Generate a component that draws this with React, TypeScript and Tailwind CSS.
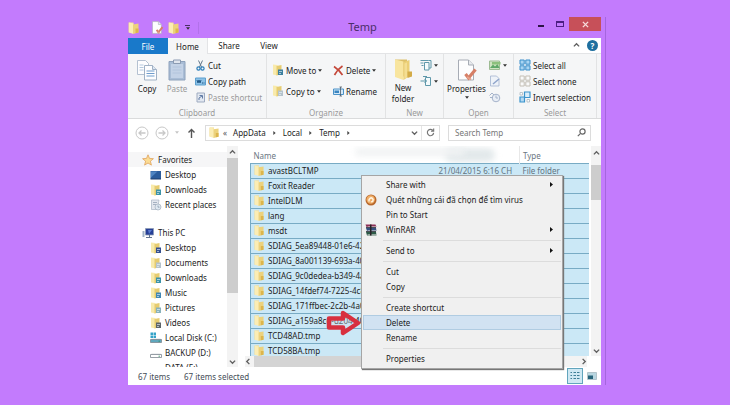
import type { ReactNode } from "react";
import clsx from "clsx";

interface IconProps {
  className?: string;
}

function FolderIcon({ className = "w-[11px] h-3" }: IconProps) {
  return (
    <svg viewBox="0 0 11 12" preserveAspectRatio="none" className={clsx("shrink-0", className)}>
      <path d="M0.500 0.500h5v10h-5z" fill="#f3dd92" />
      <path d="M1 0.500l4.500 1v10.500l-4.500-1.500z" fill="#fbedb4" />
      <path d="M5 2.500l5.500-1v9l-5.500 1.500z" fill="#ecd27c" />
      <path d="M7.500 6.500h3v4l-3 0.800z" fill="#dcb54c" />
    </svg>
  );
}

function BadgeFolderIcon({ color }: { color: string }) {
  return (
    <svg viewBox="0 0 12 12" className="size-3 shrink-0">
      <path d="M1 0.500l4.500 0.500v10.500l-4.500-1z" fill="#f8eaac" />
      <path d="M4.500 2l5-1v9l-5 1.500z" fill="#e6cc70" />
      <path d="M6 5.500h5v5.500H6z" fill={color} />
      <path d="M7 7.500h3M7 9.500h2" stroke="#eef6fb" strokeWidth="0.600" />
    </svg>
  );
}

function StarIcon() {
  return (
    <svg viewBox="0 0 12 12" className="size-3 shrink-0">
      <path d="M6 0.800l1.500 3.600 3.900 0.300-3 2.500 1 3.900L6 9l-3.400 2.100 1-3.900-3-2.500 3.900-0.300z" fill="#fbdc94" stroke="#e0a25a" strokeWidth="0.800" />
    </svg>
  );
}

function MonitorIcon() {
  return (
    <svg viewBox="0 0 12 12" className="size-3 shrink-0">
      <path d="M0.500 2h10.500v8H0.500z" fill="#2a5c9c" />
      <path d="M1 2.500l6.500 0-6.500 6z" fill="#4e84c2" />
      <path d="M0.500 10h10.500" stroke="#1c3c6c" />
    </svg>
  );
}

function ComputerIcon() {
  return (
    <svg viewBox="0 0 12 12" className="size-3 shrink-0">
      <path d="M0.500 4h2v6h-2z" fill="#9fb0c4" />
      <path d="M3.500 1.500h8v6.500h-8z" fill="#263f96" stroke="#8b9bb5" strokeWidth="0.800" />
      <path d="M6 3l4 0-3 4z" fill="#5a7ad0" />
      <path d="M4 10.500h6M7.500 8v2.500" stroke="#63758f" />
    </svg>
  );
}

function RecentIcon() {
  return (
    <svg viewBox="0 0 12 12" className="size-3 shrink-0">
      <path d="M1.500 1h7.500l-1.500 9.500h-6z" fill="#e3e7ee" stroke="#a9b4c4" strokeWidth="0.700" />
      <path d="M3 3.500h4M3 5.500h3" stroke="#8898ac" strokeWidth="0.700" />
      <circle cx="8" cy="8" r="3" fill="#dfe9f2" stroke="#a3afbd" strokeWidth="0.700" />
      <path d="M8 6.500v1.700h1.500" fill="none" stroke="#7f90a3" strokeWidth="0.700" />
    </svg>
  );
}

function DiskIcon({ system }: { system?: boolean }) {
  return (
    <svg viewBox="0 0 12 12" className="size-3 shrink-0">
      {system && <path d="M0.500 0.500h2.500v2.500H0.500zM3.500 0.500h2.500v2.500H3.500zM0.500 3.500h2.500v2.500H0.500zM3.500 3.500h2.500v2.500H3.500z" fill="#35a3c9" />}
      <path d="M1.500 6.500h9l1 2H0.500z" fill="#dfe3e6" />
      <path d="M0.500 7.500h11v3H0.500z" fill={system ? "#5fa7bd" : "#fff"} stroke="#7d8890" strokeWidth="0.800" />
      <path d="M8.500 9.200h1.500" stroke="#2f8b5c" strokeWidth="0.800" />
    </svg>
  );
}

function DocCheckIcon({ className = "size-3" }: IconProps) {
  return (
    <svg viewBox="0 0 22 22" className={clsx("shrink-0", className)}>
      <path d="M2.500 1h10l5 5v15h-15z" fill="#fdfdfe" stroke="#a7acb5" />
      <path d="M12.500 1v5h5" fill="#e7eaee" stroke="#a7acb5" />
      <path d="M9.500 15l3 4 7-8.500" fill="none" stroke="#d67f66" strokeWidth="3.200" />
      <path d="M11 18l4 2.500" stroke="#e6a08a" strokeWidth="2" />
    </svg>
  );
}

function CopyIcon() {
  return (
    <svg viewBox="0 0 22 22" className="size-[22px]">
      <path d="M1.500 1.500h8l3 3v11h-11z" fill="#fdfdfe" stroke="#b4c1d1" />
      <path d="M3.500 6h4M3.500 8.500h4M3.500 11h4" stroke="#b4c8de" />
      <path d="M8.500 6.500h8l4 4v10.500h-12z" fill="#fdfdfe" stroke="#a0b1c5" />
      <path d="M16.500 6.500v4h4" fill="#dde7f2" stroke="#a0b1c5" />
      <path d="M10.500 12h8M10.500 14.500h8M10.500 17h8" stroke="#6f9ccc" />
    </svg>
  );
}

function PasteIcon() {
  return (
    <svg viewBox="0 0 22 22" className="size-[22px]">
      <path d="M3 2.500h16v18.500H3z" fill="#a9bdd6" stroke="#8ea2bc" />
      <path d="M5 5h12v14H5z" fill="#c3d2e6" />
      <path d="M7.500 1h7v3.500h-7z" fill="#dfe5ee" stroke="#8b9bb2" />
      <path d="M6.500 8h9M6.500 11h9M6.500 14h9" stroke="#b2c4dc" />
    </svg>
  );
}

function BigFolderIcon() {
  return (
    <svg viewBox="0 0 22 22" className="size-[22px]">
      <path d="M3 1.500h12v17H3z" fill="#dcc06a" />
      <path d="M3 1.500l8.500 2v18.500L3 19z" fill="#f8e59f" />
      <path d="M11.500 4l6-2v16l-6 4z" fill="#ebcf76" />
      <path d="M12.500 5.500l2.500-1v15l-2.500 1.200z" fill="#f4de93" />
      <path d="M15.500 13.500h4.500v5l-4.500 1.500z" fill="#d3ab48" />
    </svg>
  );
}

function ScissorsIcon() {
  return (
    <svg viewBox="0 0 11 11" className="size-[11px]" fill="none">
      <path d="M3.500 0.500l3 6.500M7.500 0.500l-3 6.500" stroke="#64788c" />
      <circle cx="3.500" cy="8.500" r="1.600" stroke="#2b7db8" strokeWidth="1.200" />
      <circle cx="7.500" cy="8.500" r="1.600" stroke="#2b7db8" strokeWidth="1.200" />
    </svg>
  );
}

function CopyPathIcon() {
  return (
    <svg viewBox="0 0 11 11" className="size-[11px]">
      <path d="M0.500 2h10v7h-10z" fill="#8cc1e6" stroke="#5b9fce" />
      <path d="M2 4l1 3 1-3 1 3 1-3M7 7h1M8.500 7h1" fill="none" stroke="#164f7e" strokeWidth="0.900" />
    </svg>
  );
}

function ShortcutIcon() {
  return (
    <svg viewBox="0 0 11 11" className="size-[11px]">
      <path d="M2 1h7.500v9H2z" fill="#e2e8f1" stroke="#9eabc0" />
      <path d="M4 8V6l3-2M4.500 3.500H7.500V6.500" fill="none" stroke="#607ba5" />
    </svg>
  );
}

function DeleteIcon() {
  return (
    <svg viewBox="0 0 11 11" className="size-[11px]" fill="none">
      <path d="M1 1.500c3 2 6 5 8.500 8.500M9.500 1c-3 2-6 5-8 9" stroke="#c4483a" strokeWidth="1.700" />
    </svg>
  );
}

function RenameIcon() {
  return (
    <svg viewBox="0 0 11 11" className="size-[11px]">
      <path d="M0.500 3h10v5.500h-10z" fill="#d4e8f7" stroke="#4a92c8" />
      <path d="M1.500 4.500h4.500v2.500H1.500z" fill="#3b86c1" />
      <path d="M7.500 1v9M6.500 1h2.500M6.500 10h2.500" stroke="#4b5a68" strokeWidth="0.800" />
    </svg>
  );
}

function PagesIcon() {
  return (
    <svg viewBox="0 0 12 12" className="size-3" fill="none" stroke="#5f98aa">
      <path d="M0.500 1.500h8M0.500 4h3M1.500 6.500h2" />
      <path d="M4.500 3.500h4.500v7.500H4.500z" fill="#f4fafc" />
      <path d="M8.500 1.500h2.500v7.500H9" />
    </svg>
  );
}

function EasyAccessIcon() {
  return (
    <svg viewBox="0 0 12 12" className="size-3" fill="none" stroke="#5f98aa">
      <path d="M5.500 2.500h5v8h-5z" fill="#f4fafc" />
      <path d="M0.500 6h6M4.500 4l2 2-2 2" />
      <path d="M3 1.500h4" />
    </svg>
  );
}

function OpenIcon() {
  return (
    <svg viewBox="0 0 12 12" className="size-3">
      <path d="M0.500 2h10v8.500h-10z" fill="#cfe3c2" stroke="#9dbb93" />
      <path d="M1 9l3-3.500 2 2 2.500-2.500 2 4z" fill="#5fa868" />
      <path d="M3 3h8.500v2.500H3z" fill="#8cc07c" />
    </svg>
  );
}

function EditIcon() {
  return (
    <svg viewBox="0 0 12 12" className="size-3">
      <path d="M1.500 1h6l2.500 2.500V11H1.500z" fill="#eef2f8" stroke="#a3b4cf" strokeWidth="0.800" />
      <path d="M4 9l6-5" stroke="#8fa4ca" strokeWidth="1.500" />
    </svg>
  );
}

function HistoryIcon() {
  return (
    <svg viewBox="0 0 12 12" className="size-3" fill="none" stroke="#a5b3ca">
      <circle cx="7" cy="7" r="3.800" fill="#e9eef6" />
      <path d="M7 4.500V7h2M0.500 4.500L3 2l2 2M1 6.500h3" />
    </svg>
  );
}

function SelectIcon({ mode }: { mode: "all" | "none" | "invert" }) {
  if (mode === "invert") {
    return (
      <svg viewBox="0 0 12 12" className="size-3">
        <path d="M5.500 1h5.500v5.500H5.500z" fill="#d9edfa" stroke="#3b93cc" strokeWidth="1.200" />
        <path d="M1 6h4.500v5H1z" fill="#b4d9f3" stroke="#3b93cc" strokeWidth="1.200" />
        <path d="M1 1.500h2.500v2.500H1zM8 8.500h2.500v2.500H8z" fill="#fff" stroke="#a9b7c0" strokeWidth="0.800" />
      </svg>
    );
  }
  return (
    <svg
      viewBox="0 0 12 12"
      className="size-3"
      fill={mode === "all" ? "#a9d4f2" : "#fafafa"}
      stroke={mode === "all" ? "#3b8fca" : "#c3beb4"}
    >
      <path d="M1 1h4.200v4.200H1zM6.800 1H11v4.200H6.800zM1 6.800h4.200V11H1zM6.800 6.800H11V11H6.800z" />
    </svg>
  );
}

function Caret() {
  return (
    <svg viewBox="0 0 5 3" className="h-[3px] w-1 shrink-0">
      <path d="M0 0h5L2.500 3z" fill="#333" />
    </svg>
  );
}

function Chevron({ dir, className = "size-[7px]" }: { dir: "up" | "down" | "left" | "right"; className?: string }) {
  const paths = { up: "M1 5l3-3 3 3", down: "M1 3l3 3 3-3", left: "M5 1L2 4l3 3", right: "M3 1l3 3-3 3" };
  return (
    <svg viewBox="0 0 8 8" className={clsx("shrink-0", className)}>
      <path d={paths[dir]} fill="none" stroke="#606060" strokeWidth="1.600" />
    </svg>
  );
}

function TitleBar() {
  return (
    <header className="flex h-[21px] shrink-0">
      <div className="flex flex-1 items-center">
        <FolderIcon />
        <DocCheckIcon className="ml-3 size-[13px]" />
        <FolderIcon className="ml-1 h-3 w-[11px]" />
        <button aria-label="Customize Quick Access Toolbar" className="ml-1.5 flex flex-col items-center gap-px">
          <span className="h-px w-[5px] bg-[#4a2d66]" />
          <Caret />
        </button>
        <span className="ml-2 h-3 w-px bg-[#b271ea]" />
      </div>
      <h1 className="pr-1 pt-px text-[11px] leading-[18px] text-[#4a2d68]">Temp</h1>
      <div className="flex flex-1 items-start justify-end">
        <button aria-label="Minimize" className="flex h-3.5 w-[18px] items-center justify-center">
          <span className="mt-1 h-0.5 w-1.5 bg-[#2d1447]" />
        </button>
        <button aria-label="Maximize" className="flex h-3.5 w-[19px] items-center justify-center">
          <span className="h-1.5 w-2 border border-t-2 border-[#4c1f83]" />
        </button>
        <button aria-label="Close" className="flex h-3.5 w-8 items-center justify-center bg-[#c75059]">
          <svg viewBox="0 0 8 8" className="size-[7px]">
            <path d="M1 1l6 6M7 1L1 7" stroke="#f6dcdc" strokeWidth="1.600" />
          </svg>
        </button>
      </div>
    </header>
  );
}

function TabBar() {
  return (
    <div className="flex h-4 shrink-0 items-stretch bg-white">
      <button className="w-10 bg-[#1979ca] text-white">File</button>
      <button className="w-10 border-r border-[#e3e4e6] bg-[#f5f6f7]">Home</button>
      <button className="w-[42px] border-b border-[#e3e4e6]">Share</button>
      <button className="w-[38px] border-b border-[#e3e4e6]">View</button>
      <div className="flex flex-1 items-center justify-end gap-[7px] border-b border-[#e3e4e6] pr-[3px]">
        <button aria-label="Minimize the Ribbon">
          <Chevron dir="up" />
        </button>
        <button aria-label="Help" className="flex size-[11px] items-center justify-center rounded-full bg-[#1e6f9f] font-bold text-white">
          ?
        </button>
      </div>
    </div>
  );
}

function RibbonGroup({ label, className, children }: { label: string; className: string; children: ReactNode }) {
  return (
    <section className={clsx("flex flex-col border-r border-[#e2e3e4]", className)}>
      <div className="flex min-h-0 flex-1 pt-[3px]">{children}</div>
      <h2 className="text-center leading-[11px] text-[#9a9a9a]">{label}</h2>
    </section>
  );
}

function SmallButton({ icon, label, caret, disabled }: { icon: ReactNode; label: string; caret?: boolean; disabled?: boolean }) {
  return (
    <button disabled={disabled} className={clsx("flex h-4 items-center gap-0.5 whitespace-nowrap", disabled && "text-[#9a9a9a]")}>
      {icon}
      {label}
      {caret && <Caret />}
    </button>
  );
}

function IconMenuButton({ icon, label, caret }: { icon: ReactNode; label: string; caret?: boolean }) {
  return (
    <button aria-label={label} className="flex h-4 items-center gap-0.5">
      {icon}
      {caret && <Caret />}
    </button>
  );
}

function Ribbon() {
  return (
    <div className="flex h-[65px] shrink-0 border-b border-[#dadbdc] bg-[#f5f6f7]">
      <RibbonGroup label="Clipboard" className="w-[139px]">
        <button className="ml-1 flex w-[30px] flex-col items-center pt-0.5">
          <CopyIcon />
          <span className="pt-0.5">Copy</span>
        </button>
        <button disabled className="flex w-[30px] flex-col items-center pt-0.5 text-[#9a9a9a]">
          <PasteIcon />
          <span className="pt-0.5">Paste</span>
        </button>
        <div className="ml-[3px]">
          <SmallButton icon={<ScissorsIcon />} label="Cut" />
          <SmallButton icon={<CopyPathIcon />} label="Copy path" />
          <SmallButton icon={<ShortcutIcon />} label="Paste shortcut" disabled />
        </div>
      </RibbonGroup>
      <RibbonGroup label="Organize" className="w-[119px]">
        <div className="ml-[5px] flex w-[61px] flex-col gap-[5px] pt-[5px]">
          <SmallButton icon={<BadgeFolderIcon color="#3c7f9e" />} label="Move to" caret />
          <SmallButton icon={<BadgeFolderIcon color="#b5c3cc" />} label="Copy to" caret />
        </div>
        <div className="flex flex-col gap-[5px] pt-[5px]">
          <SmallButton icon={<DeleteIcon />} label="Delete" caret />
          <SmallButton icon={<RenameIcon />} label="Rename" />
        </div>
      </RibbonGroup>
      <RibbonGroup label="New" className="w-[58px]">
        <button className="ml-0.5 flex w-[30px] flex-col items-center pt-px">
          <BigFolderIcon />
          <span className="pt-0.5">New</span>
          <span>folder</span>
        </button>
        <div className="ml-0.5">
          <IconMenuButton icon={<PagesIcon />} label="New item" caret />
          <IconMenuButton icon={<EasyAccessIcon />} label="Easy access" caret />
        </div>
      </RibbonGroup>
      <RibbonGroup label="Open" className="w-[70px]">
        <button className="ml-[3px] flex w-[39px] flex-col items-center pt-0.5">
          <DocCheckIcon className="size-[22px]" />
          <span className="pt-0.5 pb-0.5">Properties</span>
          <Caret />
        </button>
        <div className="ml-[3px]">
          <IconMenuButton icon={<OpenIcon />} label="Open" caret />
          <IconMenuButton icon={<EditIcon />} label="Edit" />
          <IconMenuButton icon={<HistoryIcon />} label="History" />
        </div>
      </RibbonGroup>
      <RibbonGroup label="Select" className="w-[83px]">
        <div className="ml-[5px]">
          <SmallButton icon={<SelectIcon mode="all" />} label="Select all" />
          <SmallButton icon={<SelectIcon mode="none" />} label="Select none" />
          <SmallButton icon={<SelectIcon mode="invert" />} label="Invert selection" />
        </div>
      </RibbonGroup>
    </div>
  );
}

function RoundArrow({ flip, label }: { flip?: boolean; label: string }) {
  return (
    <button aria-label={label}>
      <svg viewBox="0 0 14 14" className={clsx("size-3.5", flip && "-scale-x-100")} fill="none" stroke="#c8c8c8">
        <circle cx="7" cy="7" r="6" />
        <path d="M10.500 7H4M6.500 4.500L4 7l2.500 2.500" strokeWidth="1.300" />
      </svg>
    </button>
  );
}

function Crumb({ label }: { label: string }) {
  return (
    <>
      <button>{label}</button>
      <svg viewBox="0 0 3 5" className="mx-[7px] h-1 w-[3px]">
        <path d="M0 0l3 2.500L0 5z" fill="#444" />
      </svg>
    </>
  );
}

function AddressRow() {
  return (
    <div className="flex h-[27px] shrink-0 items-center bg-white pr-2.5">
      <div className="flex w-[77px] items-center gap-1.5 pl-[7px]">
        <RoundArrow label="Back" />
        <RoundArrow label="Forward" flip />
        <svg viewBox="0 0 5 3" className="h-[3px] w-1">
          <path d="M0 0h5L2.500 3z" fill="#c4c4c4" />
        </svg>
        <button aria-label="Up" className="ml-0.5">
          <svg viewBox="0 0 9 10" className="h-2.5 w-[9px]" fill="none" stroke="#555" strokeWidth="1.400">
            <path d="M4.500 10V1.500M1.500 4.500l3-3 3 3" />
          </svg>
        </button>
      </div>
      <nav aria-label="Address" className="flex h-4 flex-1 items-center border border-[#dcdcdc] pl-[3px]">
        <FolderIcon className="h-[11px] w-2.5" />
        <span className="mr-1.5 ml-1 text-[#555]">«</span>
        <Crumb label="AppData" />
        <Crumb label="Local" />
        <Crumb label="Temp" />
        <button aria-label="Previous locations" className="ml-auto pr-[3px]">
          <Chevron dir="down" />
        </button>
        <button aria-label="Refresh" className="flex h-full w-[18px] items-center justify-center border-l border-[#e4e4e4]">
          <svg viewBox="0 0 10 10" className="size-[9px]" fill="none" stroke="#777" strokeWidth="1.300">
            <path d="M8 3.200A3.500 3.500 0 1 0 8.500 5.500" />
            <path d="M8.500 0.500v3h-3" />
          </svg>
        </button>
      </nav>
      <label className="ml-2 flex h-4 w-[143px] items-center border border-[#dcdcdc] pr-1 pl-1.5">
        <input type="search" aria-label="Search Temp" placeholder="Search Temp" className="w-full min-w-0 outline-none placeholder:text-[#767676]" />
        <svg viewBox="0 0 9 9" className="size-[9px] shrink-0" fill="none" stroke="#666" strokeWidth="1.200">
          <circle cx="5.500" cy="3.500" r="2.600" />
          <path d="M3.600 5.400L0.800 8.200" />
        </svg>
      </label>
    </div>
  );
}

const favorites = [
  { label: "Desktop", icon: <MonitorIcon /> },
  { label: "Downloads", icon: <BadgeFolderIcon color="#3c93a8" /> },
  { label: "Recent places", icon: <RecentIcon /> },
];

const thisPc = [
  { label: "Desktop", icon: <BadgeFolderIcon color="#35508f" /> },
  { label: "Documents", icon: <BadgeFolderIcon color="#b5c3cc" /> },
  { label: "Downloads", icon: <BadgeFolderIcon color="#3c93a8" /> },
  { label: "Music", icon: <BadgeFolderIcon color="#4187b5" /> },
  { label: "Pictures", icon: <BadgeFolderIcon color="#88b2bb" /> },
  { label: "Videos", icon: <BadgeFolderIcon color="#5c6468" /> },
  { label: "Local Disk (C:)", icon: <DiskIcon system /> },
  { label: "BACKUP (D:)", icon: <DiskIcon /> },
  { label: "DATA (E:)", icon: <DiskIcon /> },
];

function TreeSection({ label, icon, items, active }: { label: string; icon: ReactNode; items: { label: string; icon: ReactNode }[]; active?: boolean }) {
  return (
    <div>
      <a href="#" className={clsx("flex h-[15px] items-center gap-1 pl-3.5", active && "bg-[#f6f6f7]")}>
        {icon}
        {label}
      </a>
      {items.map((item) => (
        <a key={item.label} href="#" className="flex h-[15px] items-center gap-[3px] pl-[22px] whitespace-nowrap">
          {item.icon}
          {item.label}
        </a>
      ))}
    </div>
  );
}

function Sidebar() {
  return (
    <aside className="flex w-[110px] shrink-0">
      <nav className="flex flex-1 flex-col gap-[13px] overflow-hidden pt-1.5">
        <TreeSection label="Favorites" icon={<StarIcon />} items={favorites} active />
        <TreeSection label="This PC" icon={<ComputerIcon />} items={thisPc} />
      </nav>
      <div className="flex w-[11px] flex-col items-center bg-[#f3f3f3] pt-[3px]">
        <Chevron dir="up" />
        <span className="mt-0.5 h-[62%] w-full bg-[#cdcdcd]" />
        <Chevron dir="down" className="mt-auto mb-0.5 size-[7px]" />
      </div>
    </aside>
  );
}

const files = [
  { name: "avastBCLTMP", date: "21/04/2015 6:16 CH", type: "File folder" },
  { name: "Foxit Reader" },
  { name: "IntelDLM" },
  { name: "lang" },
  { name: "msdt" },
  { name: "SDIAG_5ea89448-01e6-42" },
  { name: "SDIAG_8a001139-693a-40" },
  { name: "SDIAG_9c0dedea-b349-4a" },
  { name: "SDIAG_14fdef74-7225-4c8" },
  { name: "SDIAG_171ffbec-2c2b-4a0" },
  { name: "SDIAG_a159a8cd-d204-40" },
  { name: "TCD48AD.tmp" },
  { name: "TCD58BA.tmp" },
];

function FileList() {
  return (
    <div className="flex min-w-0 flex-1 flex-col pl-[7px]">
      <div className="flex min-h-0 flex-1">
        <div className="relative min-w-0 flex-1 overflow-hidden pl-[5px]">
          {/* smudge left over the column header */}
          <span className="absolute top-0.5 left-[200px] h-3.5 w-[50px] rounded-full bg-[#e3e9eb] blur-[3px]" />
          <span className="absolute top-0.5 left-[110px] h-2 w-[110px] rounded-full bg-[#f0f2f3] blur-[3px]" />
          <table className="relative w-full table-fixed border-collapse text-left">
            <thead>
              <tr className="h-[17px] text-[#6b7682]">
                <th className="w-[184px] pt-0.5 pl-[3px] font-normal">Name</th>
                <th aria-label="Date modified" className="w-[85px]" />
                <th className="border-l border-[#e8e8e8] pt-0.5 pl-[3px] font-normal">Type</th>
              </tr>
            </thead>
            <tbody>
              {files.map((file) => (
                <tr key={file.name} className="h-[15px] border-y border-l border-[#78abc4] bg-[#cbe8f6]">
                  <td>
                    <span className="flex items-center gap-1 pl-[3px] whitespace-nowrap">
                      <FolderIcon className="h-[11px] w-2.5" />
                      {file.name}
                    </span>
                  </td>
                  <td className="pl-1 whitespace-nowrap text-[#63747f]">{file.date}</td>
                  <td className="pl-[3px] whitespace-nowrap text-[#63747f]">{file.type}</td>
                </tr>
              ))}
            </tbody>
          </table>
        </div>
        <div className="ml-0.5 flex w-[10px] flex-col items-center bg-[#f3f3f3] pt-1">
          <Chevron dir="up" />
          <span className="mt-2 h-[35px] w-full bg-[#cdcdcd]" />
          <Chevron dir="down" className="mt-auto mb-0.5 size-[7px]" />
        </div>
      </div>
      <div className="mr-3.5 flex h-[11px] shrink-0 items-center gap-0.5 bg-[#f3f3f3]">
        <Chevron dir="left" />
        <span className="h-full w-[200px] bg-[#d4d4d4]" />
        <Chevron dir="right" className="ml-auto size-[7px]" />
      </div>
    </div>
  );
}

function StatusBar() {
  return (
    <footer className="flex h-[18px] shrink-0 items-center bg-white pr-1 pl-2.5 text-[#454d57]">
      <span>67 items</span>
      <span className="ml-3.5">67 items selected</span>
      <button aria-label="Details view" className="ml-auto flex size-4 items-center justify-center border border-[#62a5bd] bg-[#cfe8f3]">
        <svg viewBox="0 0 10 10" className="size-2.5" stroke="#3e7f96">
          <path d="M0.500 1.500h1.500M0.500 4.500h1.500M0.500 7.500h1.500M3.500 1.500h2.500M3.500 4.500h2.500M3.500 7.500h2.500M7 1.500h2.500M7 4.500h2.500M7 7.500h2.500" />
        </svg>
      </button>
      <button aria-label="Thumbnail view" className="ml-1">
        <svg viewBox="0 0 10 10" className="size-2.5">
          <path d="M0.500 1.500h9v7h-9z" fill="#b9d6e0" stroke="#b3c4ca" />
          <path d="M1 4.500h5v3.500H1z" fill="#27647a" />
        </svg>
      </button>
    </footer>
  );
}

function AvastIcon() {
  return (
    <svg viewBox="0 0 12 12" className="size-3">
      <circle cx="6" cy="6" r="5.500" fill="#b8682c" />
      <circle cx="5.700" cy="5.500" r="4.200" fill="#f0ae68" />
      <path d="M4 7.500C3.500 4.500 6 3 7.500 4.500S7.500 8.500 6 7.500" fill="none" stroke="#fff4e2" strokeWidth="1.500" />
    </svg>
  );
}

function WinrarIcon() {
  return (
    <svg viewBox="0 0 12 12" className="size-3">
      <path d="M0.500 0.500h10l1 2.500H1.500z" fill="#8b2f55" />
      <path d="M1 4h10l0.500 3H2z" fill="#35507f" />
      <path d="M1 8h10l0.500 3.500H2z" fill="#2d5a47" />
      <path d="M2.500 2.800h9M2.500 6.800h9M2.500 10.800h9" stroke="#e4e4e4" strokeWidth="0.800" />
      <path d="M5 0.500h1.500v11H5z" fill="#2a2126" />
      <path d="M1 3.500h10M1 7.500h10" stroke="#20242e" strokeWidth="0.800" />
    </svg>
  );
}

interface MenuEntry {
  label: string;
  icon?: ReactNode;
  submenu?: boolean;
  active?: boolean;
}

const menuGroups: MenuEntry[][] = [
  [
    { label: "Share with", submenu: true },
    { label: "Quét những cái đã chọn để tìm virus", icon: <AvastIcon /> },
    { label: "Pin to Start" },
    { label: "WinRAR", icon: <WinrarIcon />, submenu: true },
  ],
  [{ label: "Send to", submenu: true }],
  [{ label: "Cut" }, { label: "Copy" }],
  [{ label: "Create shortcut" }, { label: "Delete", active: true }, { label: "Rename" }],
  [{ label: "Properties" }],
];

function ContextMenu() {
  return (
    <div role="menu" className="absolute top-[158px] left-[233px] w-[202px] border border-[#a5a5a5] bg-[#f0f0f0] px-px pt-px pb-0.5 shadow-[1px_1px_1px_#777]">
      {menuGroups.map((group, i) => (
        <div key={i}>
          {i > 0 && <hr className="mt-[3px] mb-0.5 ml-5 border-t border-[#dcdcdc]" />}
          {group.map((item) => (
            <button
              key={item.label}
              role="menuitem"
              className={clsx(
                "flex h-[15px] w-full items-center border pr-[7px] pl-px",
                item.active ? "border-[#b0cce2] bg-[#d1e2f2]" : "border-transparent",
              )}
            >
              <span className="w-[21px] shrink-0">{item.icon}</span>
              <span className="whitespace-nowrap">{item.label}</span>
              {item.submenu && (
                <svg viewBox="0 0 3 5" className="ml-auto h-[5px] w-[3px]">
                  <path d="M0 0l3 2.500L0 5z" fill="#111" />
                </svg>
              )}
            </button>
          ))}
        </div>
      ))}
    </div>
  );
}

function PointerArrow() {
  return (
    <svg viewBox="0 0 36 26" className="absolute top-[293px] left-[198px] h-[26px] w-9">
      <path d="M3 8.500h14V3L32 13 17 23v-5.500H3z" fill="#d4dfea" fillOpacity="0.4" stroke="#d8303f" strokeWidth="4.500" strokeLinejoin="round" />
    </svg>
  );
}

export default function App() {
  return (
    <main className="flex h-screen min-h-[405px] flex-col bg-[#c37bfd] pt-[17px] pr-[124px] pb-5 pl-32 font-['Noto_Sans','Open_Sans',sans-serif] text-[8px] leading-[11px] text-[#1c1c1c]">
      <div className="relative flex min-h-0 flex-1 flex-col border-r border-[#a566de] pr-1">
        <TitleBar />
        <TabBar />
        <Ribbon />
        <AddressRow />
        <div className="flex min-h-0 flex-1 bg-white">
          <Sidebar />
          <FileList />
        </div>
        <StatusBar />
        <ContextMenu />
        <PointerArrow />
      </div>
    </main>
  );
}
